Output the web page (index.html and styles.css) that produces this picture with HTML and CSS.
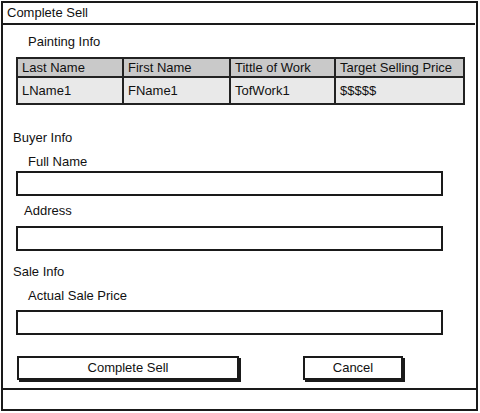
FILE: index.html
```html
<!DOCTYPE html>
<html>
<head>
<meta charset="utf-8">
<link rel="stylesheet" href="styles.css">
</head>
<body>
<div class="window">
  <div class="titlebar">Complete Sell</div>
  <div class="content">
    <div class="label sub first">Painting Info</div>
    <table class="grid">
      <tr class="head"><td class="c1">Last Name</td><td class="c2">First Name</td><td class="c3">Tittle of Work</td><td class="c4">Target Selling Price</td></tr>
      <tr class="row"><td>LName1</td><td>FName1</td><td>TofWork1</td><td>$$$$$</td></tr>
    </table>
    <div class="label section buyer">Buyer Info</div>
    <div class="label sub fn">Full Name</div>
    <div class="input in1"></div>
    <div class="label addr">Address</div>
    <div class="input in2"></div>
    <div class="label section sale">Sale Info</div>
    <div class="label sub fn">Actual Sale Price</div>
    <div class="input in3"></div>
    <div class="buttons">
      <div class="btn primary">Complete Sell</div>
      <div class="btn cancel">Cancel</div>
    </div>
  </div>
  <div class="statusbar"></div>
</div>
</body>
</html>
```

FILE: styles.css
```css
html, body { margin: 0; padding: 0; background: #fff; }
body { font-family: "Liberation Sans", Arial, sans-serif; font-size: 13px; color: #111; }
.window {
  margin: 1px 0 0 1px;
  width: 477px;
  height: 410px;
  box-sizing: border-box;
  border: 2px solid #1a1a1a;
  display: flex;
  flex-direction: column;
}
.titlebar {
  height: 22px;
  line-height: 20px;
  box-sizing: border-box;
  border-bottom: 2px solid #1a1a1a;
  padding-left: 4px;
  margin-right: 1px;
}
.content { flex: 1; display: flex; flex-direction: column; }
.label { line-height: 16px; }
.sub { padding-left: 25px; }
.first { margin-top: 9px; }
.grid {
  margin: 7px 0 0 13px;
  width: 449px;
  border-collapse: collapse;
  border: 2px solid #222;
}
.grid td { border: 2px solid #222; padding: 0 0 0 4px; text-align: left; white-space: nowrap; }
.head td { background: #c9c9c9; height: 17px; line-height: 17px; }
.row td { background: #e9e9e9; height: 25px; line-height: 25px; }
.c1 { width: 100px; }
.c2 { width: 101px; }
.c3 { width: 99px; }
.section { padding-left: 10px; }
.buyer { margin-top: 25px; }
.fn { margin-top: 8px; }
.addr { padding-left: 21px; margin-top: 7px; }
.sale { margin-top: 13px; }
.input {
  margin-left: 13px;
  width: 427px;
  height: 25px;
  box-sizing: border-box;
  border: 2px solid #1a1a1a;
}
.in1 { margin-top: 1px; }
.in2 { margin-top: 7px; }
.in3 { margin-top: 6px; }
.buttons { display: flex; margin: 21px 0 0 14px; gap: 64px; }
.btn {
  height: 24px;
  box-sizing: border-box;
  border: 2px solid #1a1a1a;
  box-shadow: 2px 2px 0 #1a1a1a;
  text-align: center;
  line-height: 20px;
}
.primary { width: 222px; }
.cancel { width: 100px; }
.statusbar {
  height: 19px;
  border-top: 2px solid #1a1a1a;
}
```
